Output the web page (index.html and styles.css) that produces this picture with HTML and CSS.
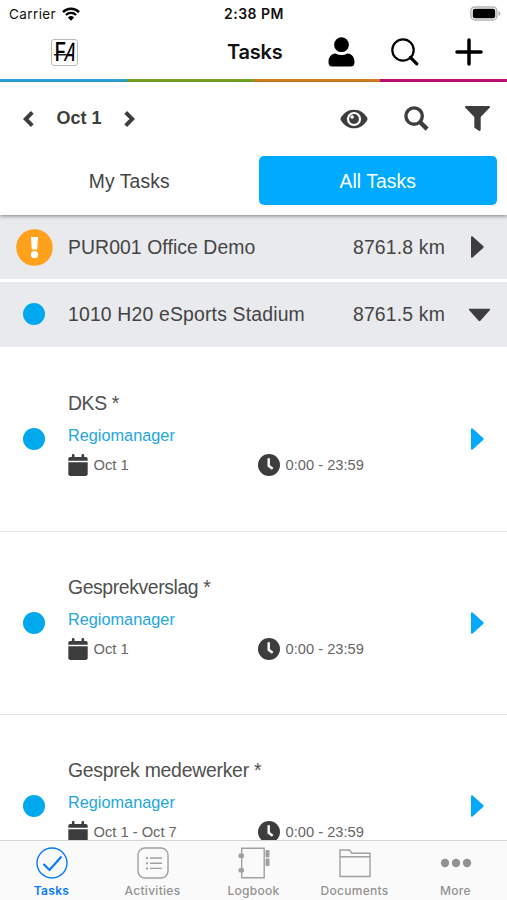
FILE: index.html
```html
<!DOCTYPE html>
<html lang="en">
<head>
<meta charset="utf-8">
<title>Tasks</title>
<link rel="stylesheet" href="styles.css">
</head>
<body>
<svg class="defs" width="0" height="0" aria-hidden="true">
  <symbol id="calendar" viewBox="0 0 20 22"><path d="M5.2 0c.8 0 1.3.5 1.3 1.3v1.600h7V1.300c0-1.700 2.600-1.700 2.600 0v1.600h1.600c1.200 0 2 .8 2 1.900v1.900H.3V4.800c0-1.100.8-1.900 2-1.900h1.600V1.300C3.900.5 4.400 0 5.200 0zM.3 8.200h19.400v11.900c0 1.100-.8 1.900-2 1.900H2.300c-1.200 0-2-.8-2-1.900z"/></symbol>
  <symbol id="clock" viewBox="0 0 22 22"><circle cx="11" cy="11" r="11"/><path d="M10.700 5.500v6.300l3 2.200" fill="none" stroke="#fff" stroke-width="2.400" stroke-linecap="square"/></symbol>
  <symbol id="caret" viewBox="0 0 13 22"><path d="M0 1.200C0 .1 1 0 1.600.6l10.600 9.500c.6.6.6 1.200 0 1.800L1.600 21.400C1 22 0 21.900 0 20.800z"/></symbol>
</svg>
<div class="screen">
  <header class="status">
    <div class="carrier"><span>Carrier</span>
      <svg width="18" height="14" viewBox="0 0 18 14" fill="none" stroke="#000"><path d="M1 5.100a11.400 11.400 0 0 1 16 0" stroke-width="2.500"/><path d="M3.900 8a7.300 7.300 0 0 1 10.200 0" stroke-width="2.300"/><path d="M9 13.700 5.900 10.500a4.500 4.500 0 0 1 6.200 0z" fill="#000" stroke="none"/></svg>
    </div>
    <div class="time">2:38 PM</div>
    <svg class="battery" width="31" height="15" viewBox="0 0 31 15"><rect x=".9" y=".9" width="26" height="13" rx="4" fill="#fff" stroke="#b5b5b5" stroke-width="1.500"/><rect x="2.800" y="2.800" width="22.400" height="9.400" rx="2"/><path d="M28.600 5c2.300.7 2.300 4.300 0 5z" fill="#aaa"/></svg>
  </header>
  <nav class="titlebar">
    <div class="logo"><span class="logo-f">F</span><span class="logo-a">A</span></div>
    <h1>Tasks</h1>
    <div class="actions">
      <svg width="27" height="30" viewBox="0 0 27 30"><circle cx="13.500" cy="7.700" r="7.400"/><path d="M7.500 16.500c4 2 8 2 12 0 4.300.2 7 3.500 7 8.500 0 3-1 4.500-4 4.500h-18c-3 0-4-1.500-4-4.500 0-5 2.700-8.300 7-8.500z"/></svg>
      <svg width="28" height="28" viewBox="0 0 28 28" fill="none" stroke="#000"><circle cx="12" cy="12" r="10.700" stroke-width="2.200"/><path d="m19.500 19.500 6.300 6.300" stroke-width="3.200" stroke-linecap="round"/></svg>
      <svg width="28" height="28" viewBox="0 0 28 28" fill="none" stroke="#000" stroke-width="3.500" stroke-linecap="round"><path d="M14 2v24M2 14h24"/></svg>
    </div>
  </nav>
  <div class="stripe"><i class="s-blue"></i><i class="s-green"></i><i class="s-orange"></i><i class="s-pink"></i></div>
  <section class="filters">
    <div class="toolbar">
      <div class="date">
        <svg width="11" height="16" viewBox="0 0 11 16"><path d="M9.300 1.400 2.700 8l6.600 6.600"/></svg>
        <b>Oct 1</b>
        <svg width="11" height="16" viewBox="0 0 11 16"><path d="M1.700 1.400 8.300 8l-6.600 6.600"/></svg>
      </div>
      <div class="tools">
        <svg width="28" height="20" viewBox="0 0 28 20"><path d="M14 .8c6 0 10.600 3.400 13.300 8.300.3.600.3 1.200 0 1.800C24.600 15.800 20 19.200 14 19.200S3.400 15.800.7 10.900a1.900 1.900 0 0 1 0-1.800C3.400 4.200 8 .8 14 .8z"/><circle cx="14" cy="10" r="7.100" fill="#fff"/><circle cx="14" cy="10" r="4.900"/><circle cx="12.100" cy="8" r="1.800" fill="#fff"/></svg>
        <svg width="25" height="25" viewBox="0 0 25 25" fill="none" stroke="#3d3d3d"><circle cx="10.100" cy="10.100" r="8.200" stroke-width="3.400"/><path d="m16.500 16.500 6.600 6.600" stroke-width="4.400"/></svg>
        <svg width="25" height="25" viewBox="0 0 25 25"><path d="M1.200 0h22.600c1.100 0 1.500 1 .8 1.700L15.700 11v12.700c0 1-1 1.500-1.800 1L9.800 21.900c-.4-.3-.5-.6-.5-1V11L.4 1.700C-.3 1 .1 0 1.200 0z"/></svg>
      </div>
    </div>
    <div class="segments"><div class="segment">My Tasks</div><div class="segment active">All Tasks</div></div>
  </section>
  <main class="list">
    <div class="group first">
      <div class="lead"><svg width="37" height="37" viewBox="0 0 37 37"><circle cx="18.500" cy="18.500" r="18.300" fill="#ffa11d"/><path d="M15 8h7l-.8 12.500h-5.400z" fill="#fff"/><circle cx="18.500" cy="25.700" r="3.600" fill="#fff"/></svg></div>
      <div class="name">PUR001 Office Demo</div><div class="distance">8761.8 km</div>
      <div class="tail"><svg width="13" height="22"><use href="#caret"/></svg></div>
    </div>
    <div class="group">
      <div class="lead"><i class="dot"></i></div>
      <div class="name wide">1010 H20 eSports Stadium</div><div class="distance">8761.5 km</div>
      <div class="tail down"><svg width="13" height="22"><use href="#caret"/></svg></div>
    </div>
    <article class="task">
      <div class="lead"><i class="dot"></i></div>
      <div class="body"><h2>DKS *</h2><p>Regiomanager</p>
        <div class="meta"><span><svg width="20" height="22"><use href="#calendar"/></svg>Oct 1</span><span class="hours"><svg width="22" height="22"><use href="#clock"/></svg>0:00 - 23:59</span></div></div>
      <div class="tail"><svg width="13" height="22"><use href="#caret"/></svg></div>
    </article>
    <article class="task">
      <div class="lead"><i class="dot"></i></div>
      <div class="body"><h2>Gesprekverslag *</h2><p>Regiomanager</p>
        <div class="meta"><span><svg width="20" height="22"><use href="#calendar"/></svg>Oct 1</span><span class="hours"><svg width="22" height="22"><use href="#clock"/></svg>0:00 - 23:59</span></div></div>
      <div class="tail"><svg width="13" height="22"><use href="#caret"/></svg></div>
    </article>
    <article class="task">
      <div class="lead"><i class="dot"></i></div>
      <div class="body"><h2 class="wide">Gesprek medewerker *</h2><p>Regiomanager</p>
        <div class="meta"><span><svg width="20" height="22"><use href="#calendar"/></svg>Oct 1 - Oct 7</span><span class="hours"><svg width="22" height="22"><use href="#clock"/></svg>0:00 - 23:59</span></div></div>
      <div class="tail"><svg width="13" height="22"><use href="#caret"/></svg></div>
    </article>
  </main>
  <footer class="tabs">
    <div class="tab current"><svg width="32" height="32" viewBox="0 0 32 32"><circle cx="16" cy="16" r="15"/><path d="m7.500 17 6 6L25.500 9.500" stroke-width="2.200"/></svg><span>Tasks</span></div>
    <div class="tab"><svg width="32" height="32" viewBox="0 0 32 32"><rect x="1" y="1" width="30" height="30" rx="7"/><path d="M13 11h12M13 16.200h12M13 21.400h12"/><path d="M9 11h2M9 16.200h2M9 21.400h2" stroke-width="2"/></svg><span>Activities</span></div>
    <div class="tab"><svg width="32" height="32" viewBox="0 0 32 32"><path d="M3.700 1.200h22.500v29.600H3.700z"/><g fill="#a0a0a0" stroke="none"><rect x=".5" y="6.500" width="5.500" height="4.500" rx="1.500"/><rect x=".5" y="21" width="5.500" height="4.500" rx="1.500"/><rect x="27.500" y="3" width="4" height="7.500" rx="1"/><rect x="27.500" y="11.500" width="4" height="7.500" rx="1"/></g></svg><span>Logbook</span></div>
    <div class="tab"><svg width="32" height="32" viewBox="0 0 32 32"><path d="M1 29.500V3h9.500l2.500 3.200h18v23.300zM1 9.800h30"/></svg><span>Documents</span></div>
    <div class="tab"><svg width="32" height="32" viewBox="0 0 32 32"><g fill="#929292" stroke="none"><circle cx="5" cy="16" r="4.200"/><circle cx="16" cy="16" r="4.200"/><circle cx="27" cy="16" r="4.200"/></g></svg><span>More</span></div>
  </footer>
</div>
</body>
</html>
```
FILE: styles.css
```css
* { box-sizing: border-box; }
body { margin: 0; background: #fff; font-family: "Liberation Sans", Arial, sans-serif; color: #444; }
svg { display: block; flex: none; }
.defs { position: absolute; }
h1, h2, p { margin: 0; font-weight: 400; }
.screen { height: 900px; display: flex; flex-direction: column; overflow: hidden; }
.status { height: 27px; flex: none; display: grid; grid-template-columns: 1fr auto 1fr; align-items: center; padding: 0 8px 0 9px; font: 500 13.500px Inter, sans-serif; color: #111; }
.carrier { display: flex; align-items: center; gap: 6px; font-weight: 400; letter-spacing: .4px; }
.time { font-weight: 600; font-size: 14px; letter-spacing: .5px; }
.battery { justify-self: end; margin-right: -2px; }
.titlebar { height: 52px; flex: none; display: grid; grid-template-columns: 176px auto 1fr; align-items: center; padding: 0 24px 2px 51px; }
.logo { width: 27px; height: 27px; border: 1px solid #bbb; border-radius: 3px; display: flex; justify-content: center; align-items: center; font: 500 25px/25px Inter, sans-serif; color: #000; background: linear-gradient(#222, #222) 2px 14px / 17px 1.500px no-repeat; }
.logo-f { transform: scaleX(.8); margin-right: -4px; }
.logo-a { transform: skewX(-14deg) scaleX(.62); margin: 0 -4px 0 -2px; }
h1 { font: 600 20px Inter, sans-serif; letter-spacing: -.2px; color: #111; }
.actions { display: flex; align-items: center; justify-content: flex-end; gap: 36px; }
.stripe { display: flex; height: 3px; flex: none; }
.stripe i { flex: 1; }
.s-blue { background: #2ba6dc; } .s-green { background: #78a922; } .s-orange { background: #d98220; } .s-pink { background: #c60d78; }
.filters { position: relative; height: 133px; flex: none; background: #fff; box-shadow: 0 1px 4px rgba(0,0,0,.45); }
.toolbar { height: 74px; display: flex; align-items: center; justify-content: space-between; padding: 0 17px 1px 23px; }
.date { display: flex; align-items: center; gap: 22.500px; font-size: 18px; color: #3d3d3d; }
.date svg { fill: none; stroke: #3d3d3d; stroke-width: 3.900; }
.tools { display: flex; align-items: center; gap: 36px; fill: #3d3d3d; }
.segments { display: grid; grid-template-columns: 1fr 1fr; padding: 0 10px; gap: 10px; font-size: 19.300px; }
.segment { height: 49px; line-height: 51px; text-align: center; border-radius: 5px; letter-spacing: .1px; }
.segment.active { background: #00aaff; color: #fff; }
.list { flex: 1; min-height: 0; overflow: hidden; }
.group, .task { display: grid; align-items: center; }
.group { grid-template-columns: 68px 1fr auto 62px; height: 65px; margin-top: 3px; background: #e9eaed; font-size: 19.400px; letter-spacing: .07px; fill: #3d3d3d; }
.group.first { height: 64px; margin: 0; }
.name.wide { letter-spacing: .17px; }
.distance { letter-spacing: .17px; }
.lead { display: flex; justify-content: center; }
.dot { width: 22px; height: 22px; border-radius: 50%; background: #00a9ee; }
.group .dot { margin-bottom: 2px; }
.tail { display: flex; justify-content: center; padding-left: 3px; }
.tail.down { padding-left: 7px; }
.down svg { transform: rotate(90deg); }
.task { grid-template-columns: 68px 1fr 63px; height: 183.300px; border-bottom: 1px solid #e5e5e5; fill: #00aaff; }
.group + .task { height: 185px; }
.body { padding-bottom: 12px; }
h2 { font-size: 19.400px; line-height: 30px; letter-spacing: -.4px; color: #505050; }
h2.wide { letter-spacing: -.25px; }
.task p { font-size: 16.300px; line-height: 34px; color: #22a6de; }
.meta { display: grid; grid-template-columns: 190px 1fr; align-items: center; font-size: 14.700px; line-height: 26px; color: #666; fill: #3d3d3d; }
.meta span { display: flex; align-items: center; gap: 5.500px; }
.tabs { height: 60px; flex: none; display: grid; grid-template-columns: repeat(5, 101px); justify-content: center; border-top: 1px solid #d5d5d5; background: #fafafa; }
.tab { display: flex; flex-direction: column; align-items: center; padding-top: 6px; gap: 4px; font: 500 12px/16px Inter, sans-serif; letter-spacing: .3px; color: #929292; }
.tab svg { fill: none; stroke: #a0a0a0; stroke-width: 1.400; }
.current { color: #087aff; font-weight: 600; }
.current svg { stroke: #087aff; }
```
